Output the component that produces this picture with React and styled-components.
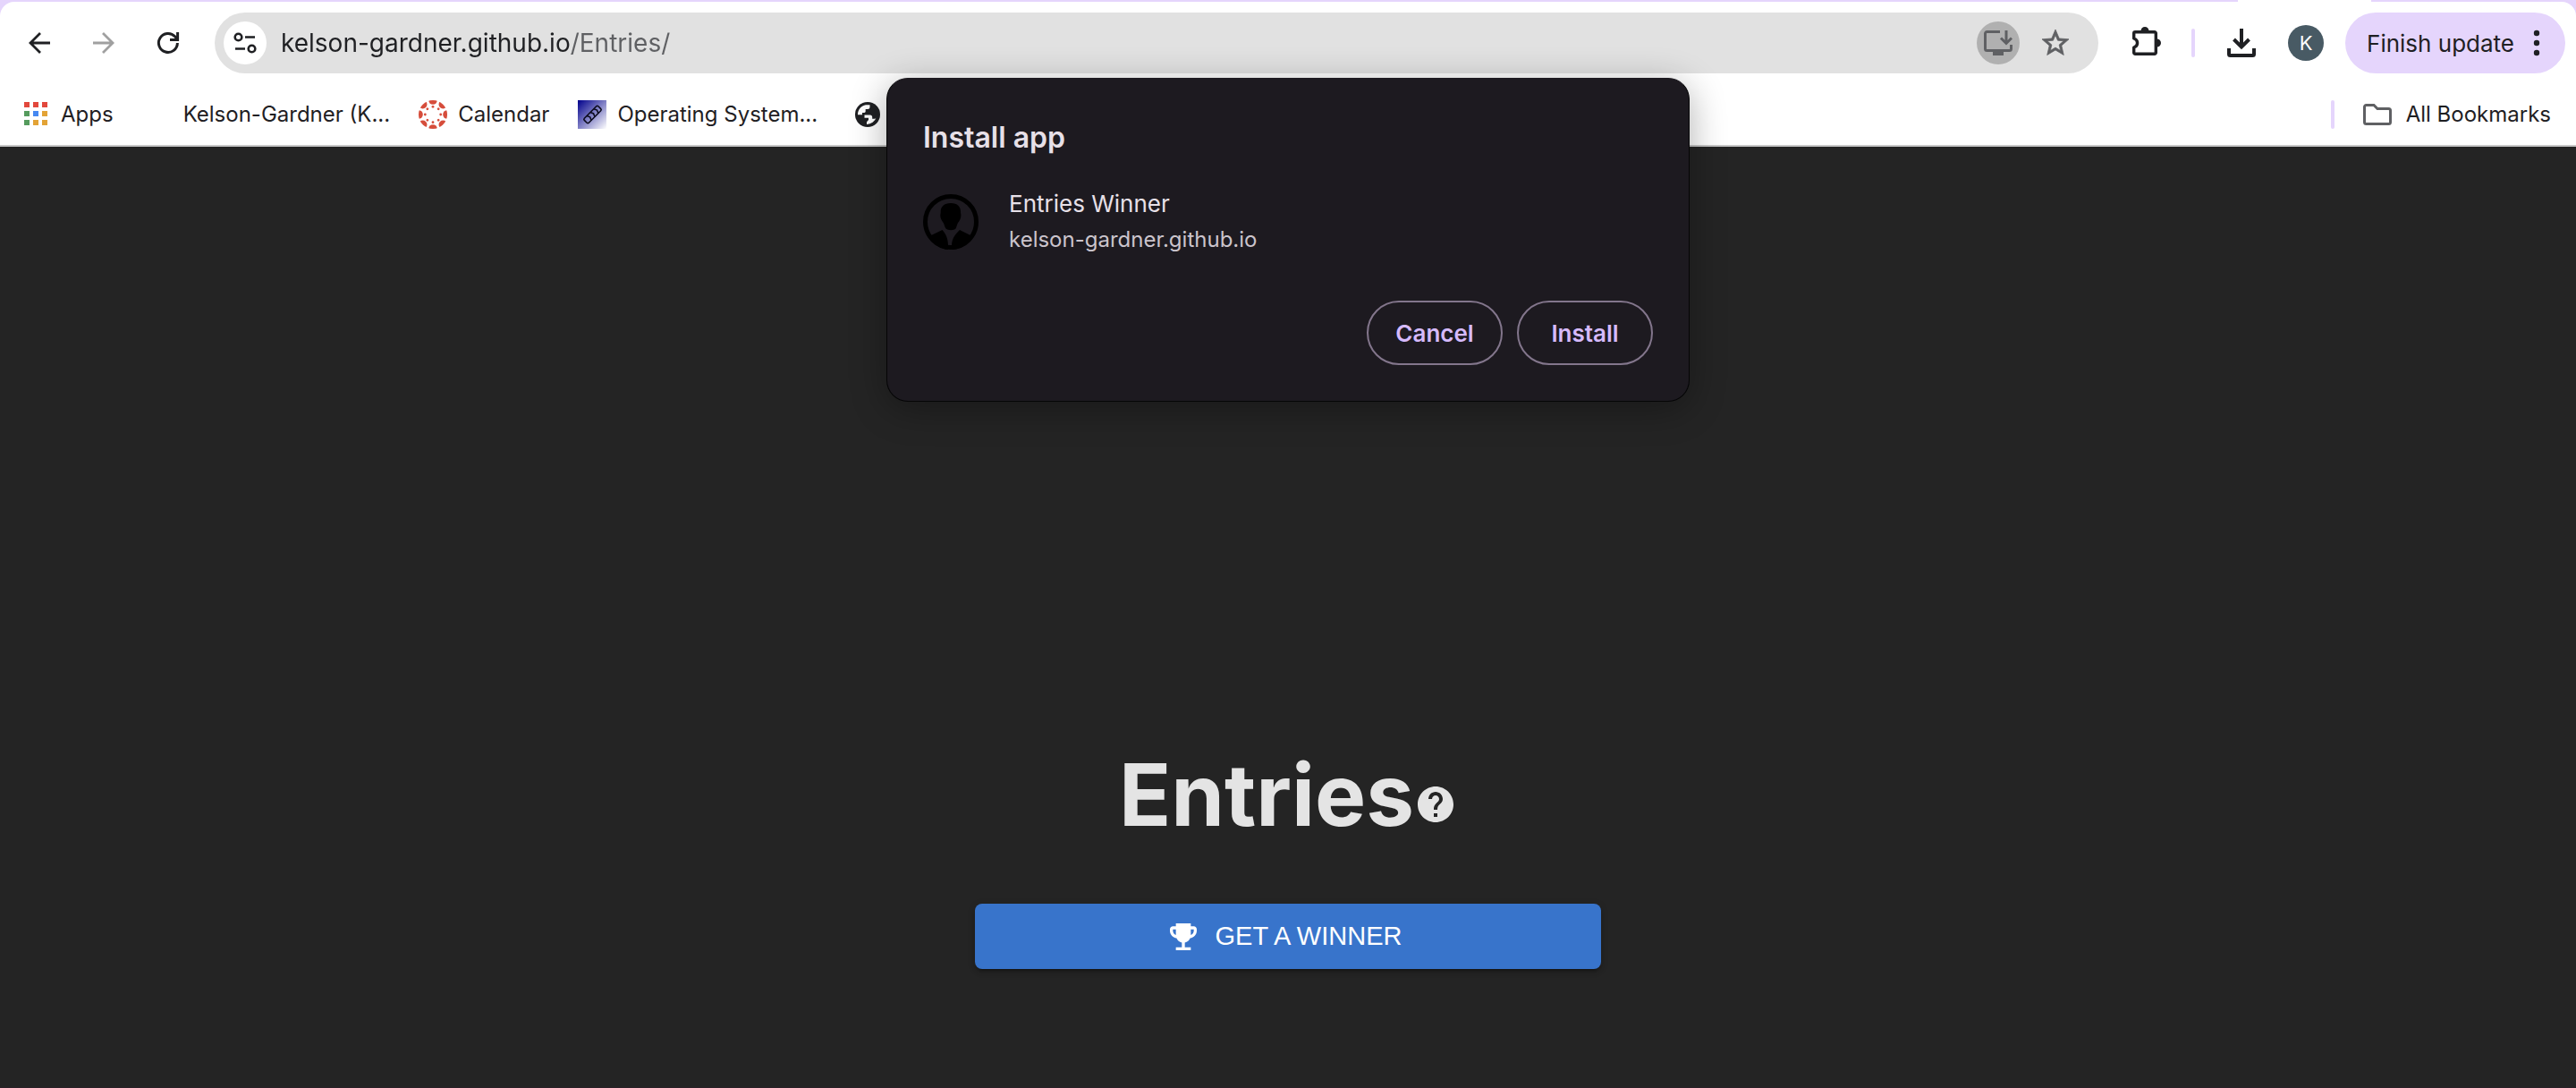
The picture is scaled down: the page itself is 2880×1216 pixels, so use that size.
import React from "react";
import styled, { createGlobalStyle } from "styled-components";
import { MdEmojiEvents, MdHelp } from "react-icons/md";

const ink = "#1f2023";
const lavender = "#e5d5fc";

const GlobalStyle = createGlobalStyle`
  *, *::before, *::after { box-sizing: border-box; }
  body {
    margin: 0;
    background: #242424;
    font-family: Inter, "Liberation Sans", sans-serif;
    -webkit-font-smoothing: antialiased;
  }
  button, input { font: inherit; }
  button { cursor: pointer; }
`;

const Page = styled.div`
  position: relative;
  min-height: 100vh;
  display: flex;
  flex-direction: column;
`;

const TabStrip = styled.div`
  height: 2px;
  background: ${lavender};
  display: flex;
  justify-content: flex-end;
  padding-right: 229px;
`;

const ActiveTabFoot = styled.div`
  width: 149px;
  background: #fff;
`;

const ChromeFrame = styled.header`
  background: ${lavender};
`;

const ChromeBody = styled.div`
  background: #fff;
  border-radius: 16px 16px 0 0;
  border-bottom: 2px solid #c7c7c7;
`;

const Toolbar = styled.div`
  display: flex;
  align-items: center;
  padding: 12px 12px 12px 16px;
`;

const NavGroup = styled.nav`
  display: flex;
  gap: 16px;
  margin-right: 24px;
`;

const IconButton = styled.button`
  display: flex;
  align-items: center;
  justify-content: center;
  width: ${(p) => p.$size || 56}px;
  height: ${(p) => p.$size || 56}px;
  padding: 0;
  border: 0;
  border-radius: 50%;
  background: ${(p) => p.$fill || "transparent"};
  color: ${(p) => p.$tone || ink};
  flex: none;
`;

const AddressBar = styled.div`
  flex: 1;
  min-width: 0;
  height: 68px;
  display: flex;
  align-items: center;
  padding: 0 24px 0 10px;
  border-radius: 34px;
  background: #e1e1e1;
`;

const AddressInput = styled.input`
  flex: 1;
  min-width: 0;
  height: 40px;
  margin: 0 16px;
  padding: 0;
  border: 0;
  outline: 0;
  font-size: 28px;
  color: ${ink};
  background: linear-gradient(90deg, ${ink} 325px, #5f6063 325px);
  -webkit-background-clip: text;
  background-clip: text;
  -webkit-text-fill-color: transparent;
`;

const AddressActions = styled.div`
  display: flex;
  gap: 16px;
`;

const Divider = styled.span`
  width: 4px;
  height: 32px;
  border-radius: 2px;
  background: ${lavender};
  flex: none;
`;

const ToolbarActions = styled.div`
  display: flex;
  align-items: center;
  gap: 24px;
  margin-left: 28px;
`;

const Avatar = styled.button`
  width: 40px;
  height: 40px;
  padding: 0;
  border: 0;
  border-radius: 50%;
  background: #485a64;
  color: #fff;
  font-size: 22px;
  line-height: 40px;
`;

const UpdateButton = styled.button`
  display: flex;
  align-items: center;
  gap: 21px;
  height: 68px;
  padding: 0 28px 0 24px;
  border: 0;
  border-radius: 34px;
  background: ${lavender};
  color: ${ink};
  font-size: 26px;
  white-space: nowrap;
`;

const BookmarksBar = styled.nav`
  display: flex;
  align-items: center;
  height: 68px;
  padding: 0 28px 0 24px;
`;

const Bookmark = styled.a`
  display: flex;
  align-items: center;
  gap: ${(p) => p.$gap || 12}px;
  margin-right: ${(p) => p.$after || 0}px;
  color: ${ink};
  font-size: 24px;
  line-height: 32px;
  text-decoration: none;
  white-space: nowrap;
`;

const AllBookmarks = styled.div`
  display: flex;
  align-items: center;
  gap: 32px;
  margin-left: auto;
`;

const BlankFavicon = styled.span`
  width: 32px;
  height: 32px;
`;

const Dialog = styled.section`
  position: absolute;
  top: 87px;
  left: 50%;
  width: 898px;
  transform: translateX(-50%);
  padding: 40px;
  border: 1px solid #050506;
  border-top-color: #1d1a20;
  border-radius: 24px;
  background: #1d1a20;
  box-shadow: 0 8px 40px rgba(0, 0, 0, 0.32);
  color: #e7e0e8;
`;

const DialogTitle = styled.h2`
  margin: 6px 0 34px;
  font-size: 32px;
  line-height: 40px;
  font-weight: 600;
`;

const AppSummary = styled.div`
  display: flex;
  align-items: center;
  gap: 34px;
`;

const AppName = styled.div`
  font-size: 26px;
  line-height: 40px;
`;

const AppHost = styled.div`
  font-size: 24px;
  line-height: 40px;
  color: #cbc4cc;
`;

const DialogActions = styled.div`
  display: flex;
  justify-content: flex-end;
  gap: 16px;
  margin-top: 48px;
`;

const PillButton = styled.button`
  width: 152px;
  height: 72px;
  padding: 0;
  border: 2px solid #83768c;
  border-radius: 36px;
  background: transparent;
  color: #d6bafc;
  font-size: 26px;
  font-weight: 600;
`;

const Main = styled.main`
  flex: 1;
  display: flex;
  flex-direction: column;
  align-items: center;
  padding: 668px 64px 64px;
  border-bottom: 1px solid #2b2127;
  color: #e4e4e4;
`;

const TitleRow = styled.div`
  display: flex;
  align-items: baseline;
`;

const Title = styled.h1`
  margin: 0;
  font-size: 96px;
  line-height: 112px;
  font-weight: 700;
`;

const WinnerButton = styled.button`
  display: flex;
  align-items: center;
  justify-content: center;
  gap: 16px;
  width: 700px;
  max-width: 100%;
  height: 73px;
  margin-top: 66px;
  padding: 0 18px 0 8px;
  border: 0;
  border-radius: 8px;
  background: #3874cb;
  color: #fff;
  font-family: "Liberation Sans", Arial, sans-serif;
  font-size: 29px;
  box-shadow: 0 6px 2px -4px rgba(0, 0, 0, 0.2), 0 4px 4px rgba(0, 0, 0, 0.14),
    0 2px 10px rgba(0, 0, 0, 0.12);
`;

const BackIcon = () => (
  <svg width="24" height="24" viewBox="0 0 24 24" fill="none" stroke="currentColor" strokeWidth="2.8">
    <path d="M24 12H2M13 1 2 12l11 11" />
  </svg>
);

const ForwardIcon = () => (
  <svg width="24" height="24" viewBox="0 0 24 24" fill="none" stroke="currentColor" strokeWidth="2.8">
    <path d="M0 12h22M11 1l11 11-11 11" />
  </svg>
);

const ReloadIcon = () => (
  <svg width="26" height="26" viewBox="0 0 26 26" fill="none" stroke="currentColor" strokeWidth="3">
    <path d="M23.4 13A10.5 10.5 0 1 1 20.6 5.8L23 8.4" />
    <path d="M23.6 1v8.5H15" />
  </svg>
);

const TuneIcon = () => (
  <svg width="26" height="24" viewBox="0 0 26 24" fill="none" stroke="currentColor" strokeWidth="2.6">
    <circle cx="5.5" cy="5.5" r="3.8" />
    <path d="M13 5.5h11M2 18.5h11" />
    <circle cx="20.5" cy="18.5" r="3.8" />
  </svg>
);

const InstallIcon = () => (
  <svg width="32" height="28" viewBox="0 0 32 28" fill="none" stroke="currentColor" strokeWidth="3">
    <path d="M18 1.5H3.5a2 2 0 0 0-2 2v17a2 2 0 0 0 2 2h25a2 2 0 0 0 2-2V16" />
    <path d="M25 0v14M19 8.5l6 6 6-6" />
    <path d="M10 24h12v4H10z" fill="currentColor" stroke="none" />
  </svg>
);

const StarIcon = () => (
  <svg width="36" height="36" viewBox="0 0 24 24" fill="currentColor" stroke="currentColor" strokeWidth="0.5">
    <path d="M22 9.240l-7.190-.620L12 2 9.190 8.630 2 9.240l5.460 4.730L5.820 21 12 17.270 18.180 21l-1.630-7.030L22 9.240zM12 15.400l-3.760 2.270 1-4.280-3.320-2.880 4.380-.380L12 6.100l1.710 4.040 4.380.380-3.320 2.880 1 4.280L12 15.400z" />
  </svg>
);

const PuzzleIcon = () => (
  <svg width="32" height="36" viewBox="0 0 32 36" fill="none">
    <path
      d="M3.200 5.700h21.600a1.500 1.500 0 0 1 1.500 1.500v21.600a1.500 1.500 0 0 1-1.500 1.500H3.200a1.500 1.500 0 0 1-1.500-1.500V23c2.600-.8 3.900-2.700 3.900-5s-1.300-4.200-3.900-5V7.200a1.500 1.500 0 0 1 1.500-1.500z"
      stroke="currentColor"
      strokeWidth="3.400"
      strokeLinejoin="round"
    />
    <path d="M9.500 5V4.500a4.500 4.500 0 0 1 9 0V5zM27 13.500h.5a4.500 4.500 0 0 1 0 9H27z" fill="currentColor" />
  </svg>
);

const DownloadIcon = () => (
  <svg width="32" height="32" viewBox="0 0 32 32" fill="none" stroke="currentColor" strokeWidth="4">
    <path d="M16 0v20M7.500 12 16 20.500 24.500 12" />
    <path d="M2 22v6.500a1.500 1.500 0 0 0 1.500 1.500h25a1.500 1.500 0 0 0 1.500-1.500V22" />
  </svg>
);

const DotsIcon = () => (
  <svg width="8" height="30" viewBox="0 0 8 30" fill="currentColor">
    <circle cx="4" cy="4" r="3.200" />
    <circle cx="4" cy="15" r="3.200" />
    <circle cx="4" cy="26" r="3.200" />
  </svg>
);

const gridColors = [
  "#e2483c", "#e2483c", "#e2483c",
  "#559b5d", "#4688f1", "#e3a336",
  "#559b5d", "#e3a336", "#e3a336",
];

const AppsIcon = () => (
  <svg width="32" height="32" viewBox="0 0 32 32">
    {gridColors.map((c, i) => (
      <rect key={i} x={3 + (i % 3) * 10} y={2 + Math.floor(i / 3) * 10} width="6" height="6" fill={c} />
    ))}
  </svg>
);

const spokes = [0, 45, 90, 135, 180, 225, 270, 315];

const CanvasIcon = () => (
  <svg width="32" height="32" viewBox="0 0 32 32" fill="#d64d3b">
    <clipPath id="canvas-disc">
      <circle cx="16" cy="16" r="16" />
    </clipPath>
    <g clipPath="url(#canvas-disc)">
      {spokes.map((a) => (
        <g key={a} transform={`rotate(${a} 16 16)`}>
          <circle cx="16" cy="0" r="4.800" />
          <circle cx="16" cy="7.300" r="1.400" />
        </g>
      ))}
    </g>
  </svg>
);

const CourseIcon = () => (
  <svg width="32" height="32" viewBox="0 0 32 32">
    <defs>
      <linearGradient id="course-fill" x1="0" y1="0" x2="1" y2="1">
        <stop offset="0" stopColor="#00008b" />
        <stop offset="1" stopColor="#fff" />
      </linearGradient>
    </defs>
    <rect width="32" height="32" fill="url(#course-fill)" />
    <g transform="rotate(-45 16.500 16)" fill="none" stroke="#0b0b1e" strokeWidth="1.600">
      <rect x="5.500" y="12.500" width="22" height="7" rx="1.500" />
      <path d="M11 12.500l1.500 3.500-1.500 3.500M16.500 12.500l1.500 3.500-1.500 3.500M22 12.500l1.500 3.500-1.500 3.500" />
    </g>
  </svg>
);

const GlobeIcon = () => (
  <svg width="28" height="28" viewBox="0 0 28 28">
    <circle cx="14" cy="14" r="14" fill={ink} />
    <path
      d="M3 13.500C3.200 8.500 7 4 12 3.200h4.500v2.300a2.500 2.500 0 0 1-2.500 2.500h-2.300v2.500a1.400 1.400 0 0 1-1.400 1.400H8v2.300H3z"
      fill="#fff"
    />
    <path
      d="M10.500 14.500h6.200a2.500 2.500 0 0 1 2.500 2.500v1.800h2.300a2.300 2.300 0 0 0 2.200-1.500A11 11 0 0 1 13 24.900v-2.600l2-2.300v-2.300h-4.500z"
      fill="#fff"
    />
  </svg>
);

const FolderIcon = () => (
  <svg width="32" height="24" viewBox="0 0 32 24" fill="none" stroke="#5f6063" strokeWidth="3">
    <path d="M3.500 1.500H12l4 4h12.500a2 2 0 0 1 2 2v13a2 2 0 0 1-2 2h-25a2 2 0 0 1-2-2v-17a2 2 0 0 1 2-2z" />
  </svg>
);

const PersonIcon = () => (
  <svg width="62" height="62" viewBox="0 0 62 62">
    <circle cx="31" cy="31" r="28.500" fill="none" stroke="#000" strokeWidth="5" />
    <path
      d="M31 10c8 0 11.500 4.500 11 11 1.200 4-.5 8-3 11-1.500 3-1.500 5-2.500 6.500-2 2.300-8.500 2.300-11 0-1.300-1.500-1.300-3.500-2.800-6.500-2.700-3-4.200-7-3-11-.5-6.500 3.300-11 11.300-11z"
      fill="#000"
    />
    <path d="M8 46.500 21.500 40c3.500 4 6.500 9 6.500 17.500V62C18 61 11 55 8 46.500zM54 46.500 41 40c-4 4-9 9-9 17.500V62c11-.5 19-7 22-15.500z" fill="#000" />
  </svg>
);

export default function App() {
  return (
    <Page>
      <GlobalStyle />
      <ChromeFrame>
        <TabStrip>
          <ActiveTabFoot />
        </TabStrip>
        <ChromeBody>
          <Toolbar>
            <NavGroup aria-label="History">
              <IconButton aria-label="Back"><BackIcon /></IconButton>
              <IconButton aria-label="Forward" $tone="#a0a0a0"><ForwardIcon /></IconButton>
              <IconButton aria-label="Reload"><ReloadIcon /></IconButton>
            </NavGroup>
            <AddressBar>
              <IconButton aria-label="Site information" $size={48} $fill="#fff"><TuneIcon /></IconButton>
              <AddressInput aria-label="Address" defaultValue="kelson-gardner.github.io/Entries/" />
              <AddressActions>
                <IconButton aria-label="Install page as app" $size={48} $fill="#b0b0b0" $tone="#5f6063"><InstallIcon /></IconButton>
                <IconButton aria-label="Bookmark this page" $size={48} $tone="#5f6063"><StarIcon /></IconButton>
              </AddressActions>
            </AddressBar>
            <ToolbarActions>
              <IconButton aria-label="Extensions" $size={52}><PuzzleIcon /></IconButton>
              <Divider />
              <IconButton aria-label="Downloads"><DownloadIcon /></IconButton>
              <Avatar aria-label="Profile K">K</Avatar>
              <UpdateButton>Finish update<DotsIcon /></UpdateButton>
            </ToolbarActions>
          </Toolbar>
          <BookmarksBar aria-label="Bookmarks">
            <Bookmark href="#apps" $after={34}><AppsIcon />Apps</Bookmark>
            <Bookmark href="#profile" $after={32}><BlankFavicon />Kelson-Gardner (K...</Bookmark>
            <Bookmark href="#calendar" $after={32}><CanvasIcon />Calendar</Bookmark>
            <Bookmark href="#course" $after={42}><CourseIcon />Operating System...</Bookmark>
            <Bookmark href="#site" aria-label="Site"><GlobeIcon /></Bookmark>
            <AllBookmarks>
              <Divider />
              <Bookmark href="#all" $gap={16}><FolderIcon />All Bookmarks</Bookmark>
            </AllBookmarks>
          </BookmarksBar>
        </ChromeBody>
      </ChromeFrame>

      <Main>
        <TitleRow>
          <Title>Entries</Title>
          <IconButton aria-label="Help" $size={48} $tone="#e4e4e4"><MdHelp size={48} /></IconButton>
        </TitleRow>
        <WinnerButton><MdEmojiEvents size={40} />GET A WINNER</WinnerButton>
      </Main>

      <Dialog role="dialog" aria-labelledby="install-title">
        <DialogTitle id="install-title">Install app</DialogTitle>
        <AppSummary>
          <PersonIcon />
          <div>
            <AppName>Entries Winner</AppName>
            <AppHost>kelson-gardner.github.io</AppHost>
          </div>
        </AppSummary>
        <DialogActions>
          <PillButton>Cancel</PillButton>
          <PillButton>Install</PillButton>
        </DialogActions>
      </Dialog>
    </Page>
  );
}
